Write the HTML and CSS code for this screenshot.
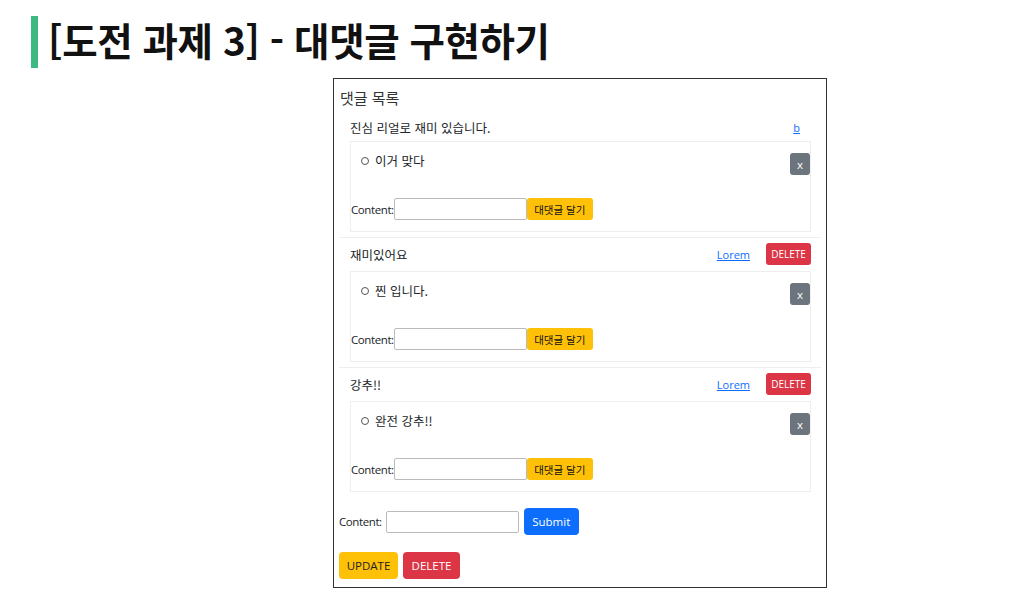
FILE: index.html
```html
<!DOCTYPE html>
<html lang="ko">
<head>
<meta charset="utf-8">
<title>대댓글 구현하기</title>
<link rel="stylesheet" href="styles.css">
</head>
<body>
<header class="title">
  <span class="title-bar"></span>
  <h1>[도전 과제 3] - 대댓글 구현하기</h1>
</header>
<main class="panel">
  <h2 class="panel-head">댓글 목록</h2>
  <ul class="comments">
    <li class="comment first">
      <div class="comment-row">
        <span class="comment-text">진심 리얼로 재미 있습니다.</span>
        <a class="author" href="#">b</a>
      </div>
      <div class="reply-box">
        <div class="reply-top">
          <ul class="replies"><li>이거 맞다</li></ul>
          <button class="btn-x">x</button>
        </div>
        <form class="reply-form">
          <label>Content:</label><input type="text"><button type="button" class="btn-reply">대댓글 달기</button>
        </form>
      </div>
    </li>
    <li class="comment">
      <div class="comment-row">
        <span class="comment-text">재미있어요</span>
        <a class="author" href="#">Lorem</a>
        <button class="btn-del-sm">DELETE</button>
      </div>
      <div class="reply-box">
        <div class="reply-top">
          <ul class="replies"><li>찐 입니다.</li></ul>
          <button class="btn-x">x</button>
        </div>
        <form class="reply-form">
          <label>Content:</label><input type="text"><button type="button" class="btn-reply">대댓글 달기</button>
        </form>
      </div>
    </li>
    <li class="comment last">
      <div class="comment-row">
        <span class="comment-text">강추!!</span>
        <a class="author" href="#">Lorem</a>
        <button class="btn-del-sm">DELETE</button>
      </div>
      <div class="reply-box">
        <div class="reply-top">
          <ul class="replies"><li>완전 강추!!</li></ul>
          <button class="btn-x">x</button>
        </div>
        <form class="reply-form">
          <label>Content:</label><input type="text"><button type="button" class="btn-reply">대댓글 달기</button>
        </form>
      </div>
    </li>
  </ul>
  <form class="main-form">
    <label>Content:</label>
    <input type="text">
    <button type="button" class="btn btn-blue">Submit</button>
  </form>
  <div class="actions">
    <button class="btn btn-yellow">UPDATE</button>
    <button class="btn btn-red">DELETE</button>
  </div>
</main>
</body>
</html>
```

FILE: styles.css
```css
* { box-sizing: border-box; }
body {
  margin: 0;
  background: #fff;
  font-family: "Open Sans", "Noto Sans CJK KR", sans-serif;
  color: #212529;
}
.title {
  display: flex;
  align-items: flex-start;
  gap: 10px;
  padding: 16px 0 0 31px;
  height: 69px;
}
.title-bar {
  width: 7px;
  height: 52px;
  background: #3dba82;
}
.title h1 {
  margin: 0;
  font-family: "Noto Sans CJK KR", sans-serif;
  font-weight: 700;
  font-size: 38.5px;
  line-height: 50px;
  margin-top: -2px;
  letter-spacing: -0.4px;
  color: #111;
}
.panel {
  margin: 9px 0 0 333px;
  width: 494px;
  height: 510px;
  border: 1px solid #333;
  padding: 6px 5px;
}
.panel-head {
  margin: 0 0 0 1px;
  font-weight: 400;
  font-size: 15px;
  line-height: 26px;
  color: #333;
  font-family: "Noto Sans CJK KR", sans-serif;
}
.comments {
  list-style: none;
  margin: 0;
  padding: 0;
}
.comment {
  padding: 5px 10px 5px 11px;
  border-bottom: 1px solid #eee;
}
.comment.first .comment-row { margin-bottom: 3px; }
.comment.last { border-bottom: none; }
.comment-row {
  display: flex;
  align-items: center;
  height: 22px;
  margin-bottom: 6px;
}
.comment-text {
  flex: 1;
  font-size: 12.5px;
  font-family: "Noto Sans CJK KR", sans-serif;
  color: #212529;
}
.author {
  font-size: 11px;
  color: #0d6efd;
  margin-right: 11px;
}
.btn-del-sm {
  margin-left: 5px;
  width: 45px;
  height: 22px;
  border: none;
  border-radius: 3px;
  background: #dc3545;
  color: #fff;
  font-family: "Open Sans", sans-serif;
  font-size: 10px;
  padding: 0;
}
.reply-box {
  border: 1px solid #eee;
  height: 91px;
  padding: 10px 0 0 0;
}
.reply-top {
  display: flex;
  justify-content: space-between;
  align-items: flex-start;
  height: 46px;
}
.replies {
  margin: 0;
  padding: 0 0 0 10px;
  list-style: none;
}
.replies li {
  font-size: 12.5px;
  line-height: 18px;
  font-family: "Noto Sans CJK KR", sans-serif;
  display: flex;
  align-items: center;
}
.replies li::before {
  content: "";
  width: 6px;
  height: 6px;
  border: 1px solid #555;
  border-radius: 50%;
  margin-right: 6px;
}
.btn-x {
  margin-top: 1px;
  width: 20px;
  height: 22px;
  border: none;
  border-radius: 3px;
  background: #6c757d;
  color: #fff;
  font-size: 11.5px;
  padding: 0;
  font-family: "Open Sans", sans-serif;
}
.reply-form {
  display: flex;
  align-items: center;
  margin: 0;
}
.reply-form label {
  font-size: 11.5px;
  letter-spacing: -0.4px;
}
.reply-form input {
  width: 133px;
  height: 22px;
  border: 1px solid #bbb;
  border-radius: 2px;
  margin: 0;
}
.btn-reply {
  width: 66px;
  height: 22px;
  border: none;
  border-radius: 3px;
  background: #ffc107;
  color: #111;
  font-family: "Noto Sans CJK KR", sans-serif;
  font-size: 10.5px;
  padding: 0;
}
.main-form {
  display: flex;
  align-items: center;
  margin: 11px 0 0 0;
  gap: 4px;
}
.main-form label {
  font-size: 11.5px;
  letter-spacing: -0.4px;
}
.main-form input {
  width: 133px;
  height: 22px;
  border: 1px solid #bbb;
  border-radius: 2px;
  margin: 0 1px 0 0;
}
.btn {
  height: 27px;
  border: none;
  border-radius: 4px;
  font-family: "Open Sans", sans-serif;
  font-size: 11.5px;
  padding: 0;
}
.btn-blue { background: #0d6efd; color: #fff; width: 55px; }
.btn-yellow { background: #ffc107; color: #222; width: 59px; }
.btn-red { background: #dc3545; color: #fff; width: 57px; }
.actions {
  display: flex;
  gap: 5px;
  margin: 17px 0 0 0;
}
```
